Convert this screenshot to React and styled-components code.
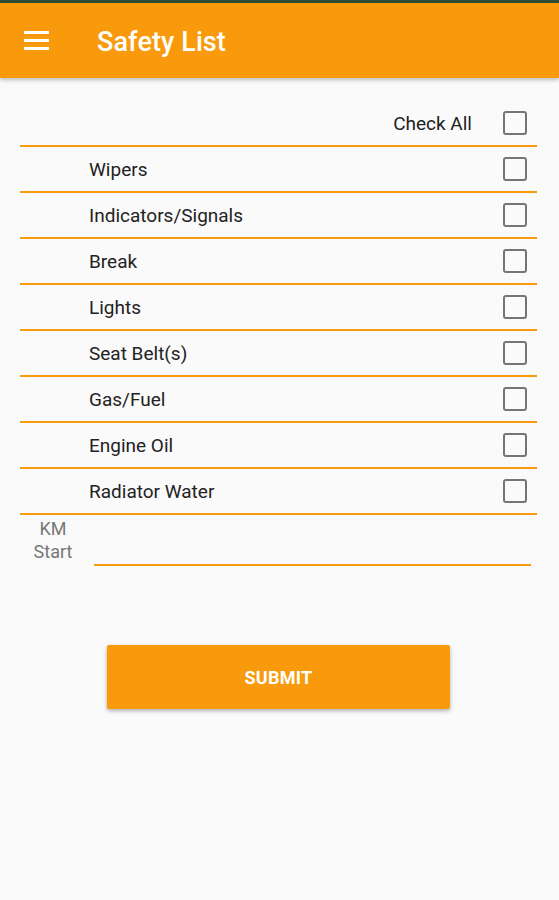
import styled, { createGlobalStyle } from "styled-components";

const GlobalStyle = createGlobalStyle`
  html, body {
    margin: 0;
    padding: 0;
    background: #fafafa;
    font-family: Roboto, "Noto Sans", sans-serif;
  }
`;

const ORANGE = "#f89a0b";

const Page = styled.div`
  width: 559px;
  min-height: 900px;
  background: #fafafa;
`;

const StatusStrip = styled.div`
  height: 3px;
  background: #2f4f36;
`;

const AppBar = styled.header`
  height: 75px;
  background: ${ORANGE};
  display: flex;
  align-items: center;
  padding-left: 24px;
  box-shadow: 0 2px 4px rgba(0, 0, 0, 0.25);
  position: relative;
`;

const MenuButton = styled.div`
  width: 25px;
  display: flex;
  flex-direction: column;
  gap: 5px;
  margin-right: 48px;

  span {
    display: block;
    height: 3px;
    background: #fff;
  }
`;

const Title = styled.h1`
  margin: 0;
  padding-top: 2px;
  color: #fff;
  font-size: 27px;
  font-weight: 500;
  letter-spacing: 0.1px;
`;

const List = styled.div`
  margin: 23px 22px 0 20px;
`;

const Row = styled.div`
  height: 44px;
  border-bottom: 2px solid ${ORANGE};
  display: flex;
  align-items: center;
  justify-content: ${(p) => (p.$right ? "flex-end" : "flex-start")};
  padding-left: ${(p) => (p.$right ? "0" : "69px")};
  padding-right: 10px;
`;

const Label = styled.span`
  flex: ${(p) => (p.$right ? "none" : "1")};
  font-size: 19px;
  color: #222;
  margin-right: ${(p) => (p.$right ? "31px" : "0")};
`;

const Box = styled.span`
  width: 20px;
  height: 20px;
  border: 2px solid #757575;
  border-radius: 3px;
`;

const KmRow = styled.div`
  display: flex;
  align-items: flex-start;
  margin: 2px 28px 0 12px;
`;

const KmLabel = styled.div`
  width: 82px;
  text-align: center;
  font-size: 18px;
  line-height: 23px;
  color: #777;
`;

const KmInput = styled.div`
  flex: 1;
  height: 47px;
  border-bottom: 2px solid ${ORANGE};
`;

const ButtonWrap = styled.div`
  display: flex;
  justify-content: center;
  margin-top: 79px;
  padding-right: 2px;
`;

const SubmitButton = styled.button`
  width: 343px;
  height: 64px;
  background: ${ORANGE};
  color: #fff;
  border: none;
  border-radius: 2px;
  font-family: Roboto, sans-serif;
  font-size: 18px;
  font-weight: 700;
  letter-spacing: 0.3px;
  box-shadow: 0 2px 4px rgba(0, 0, 0, 0.3);
`;

const items = [
  "Wipers",
  "Indicators/Signals",
  "Break",
  "Lights",
  "Seat Belt(s)",
  "Gas/Fuel",
  "Engine Oil",
  "Radiator Water",
];

export default function App() {
  return (
    <Page>
      <GlobalStyle />
      <StatusStrip />
      <AppBar>
        <MenuButton>
          <span />
          <span />
          <span />
        </MenuButton>
        <Title>Safety List</Title>
      </AppBar>
      <List>
        <Row $right>
          <Label $right>Check All</Label>
          <Box />
        </Row>
        {items.map((item) => (
          <Row key={item}>
            <Label>{item}</Label>
            <Box />
          </Row>
        ))}
      </List>
      <KmRow>
        <KmLabel>
          KM
          <br />
          Start
        </KmLabel>
        <KmInput />
      </KmRow>
      <ButtonWrap>
        <SubmitButton>SUBMIT</SubmitButton>
      </ButtonWrap>
    </Page>
  );
}
